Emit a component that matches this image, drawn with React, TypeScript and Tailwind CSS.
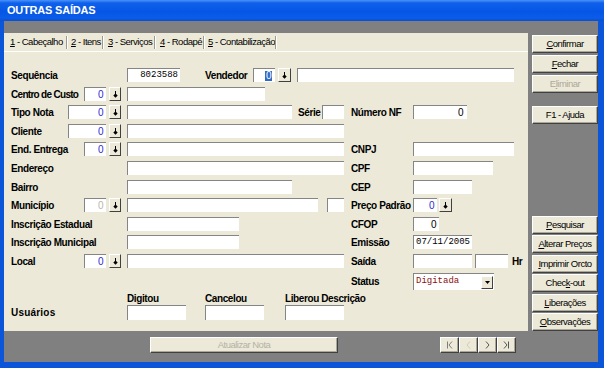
import React from 'react';

function Lbl({ c, children }: { c: string; children: React.ReactNode }) {
  return (
    <div className={`${c} h-[14px] shrink-0 flex items-center whitespace-nowrap text-[10px] font-bold tracking-[-0.4px] text-black`}>
      {children}
    </div>
  );
}

function Box({ c, children }: { c: string; children?: React.ReactNode }) {
  return (
    <div className={`${c} h-[14px] shrink-0 flex items-center overflow-hidden bg-white border-t border-l border-[#858585]`}>
      {children}
    </div>
  );
}

function Zero({ dim }: { dim?: boolean }) {
  return <span className={`ml-auto pr-[3px] text-[10px] ${dim ? 'text-[#b9b6aa]' : 'text-[#2a2ad6]'}`}>0</span>;
}

function SBtn({ c = 'ml-[3px] w-[12px]' }: { c?: string }) {
  return (
    <div className={`${c} h-[14px] shrink-0 flex items-center justify-center bg-[#ece9d8] border border-white border-r-[#404040] border-b-[#404040]`}>
      <svg width="5" height="7" viewBox="0 0 5 7">
        <path d="M2.5 0V3" stroke="#000" strokeWidth="1" />
        <path d="M0.3 4.6 2.5 2.4 4.7 4.6 2.5 6.8Z" fill="#000" />
      </svg>
    </div>
  );
}

function Btn({ children, c = '', off }: { children: React.ReactNode; c?: string; off?: boolean }) {
  return (
    <div
      className={`${c} h-[18px] shrink-0 flex items-center justify-center whitespace-nowrap bg-[#ece9d8] border border-white border-r-[#404040] border-b-[#404040] shadow-[inset_-1px_-1px_0_#aca899] ${off ? 'text-[#aca899]' : 'text-black'}`}
    >
      {children}
    </div>
  );
}

function Sep() {
  return (
    <div className="flex h-[13px] shrink-0">
      <div className="w-px bg-[#9d9a8c]" />
      <div className="w-px bg-white" />
    </div>
  );
}

function Tab({ c, n, label }: { c: string; n: string; label: string }) {
  return (
    <div className={`${c} shrink-0 whitespace-nowrap`}>
      <span className="underline underline-offset-1">{n}</span> - {label}
    </div>
  );
}

function UserCol({ label }: { label: string }) {
  return (
    <div className="flex flex-col w-[59px] shrink-0">
      <div className="h-[13px] flex items-center whitespace-nowrap text-[10px] font-bold tracking-[-0.4px]">{label}</div>
      <div className="h-[15px] bg-white border-t border-l border-[#858585]" />
    </div>
  );
}

const mono = "font-['Liberation_Mono','DejaVu_Sans_Mono',monospace] text-[9px] tracking-normal";

function NavArrow({ kind, color }: { kind: 'first' | 'prev' | 'next' | 'last'; color: string }) {
  return (
    <div className="w-[19px] h-[16px] shrink-0 flex items-center justify-center bg-[#ece9d8] border border-white border-r-[#404040] border-b-[#404040] shadow-[inset_-1px_-1px_0_#aca899]">
      <svg width="7" height="8" viewBox="0 0 7 8" fill="none" stroke={color} strokeWidth="1">
        {kind === 'first' && (
          <>
            <path d="M1.5 0.5V7.5" />
            <path d="M6 0.5 3 4 6 7.5" />
          </>
        )}
        {kind === 'prev' && <path d="M5 0.5 2 4 5 7.5" />}
        {kind === 'next' && <path d="M2 0.5 5 4 2 7.5" />}
        {kind === 'last' && (
          <>
            <path d="M1 0.5 4 4 1 7.5" />
            <path d="M5.5 0.5V7.5" />
          </>
        )}
      </svg>
    </div>
  );
}

function Panel() {
  return (
    <div className="w-[524px] shrink-0 bg-[#ece9d8] flex flex-col">
      <div className="h-[19px] shrink-0 flex items-center border-b border-white">
        <Tab c="w-[62px] pl-[6px]" n="1" label="Cabeçalho" />
        <Sep />
        <Tab c="w-[34px] pl-[3px]" n="2" label="Itens" />
        <Sep />
        <Tab c="w-[50px] pl-[4px]" n="3" label="Serviços" />
        <Sep />
        <Tab c="w-[47px] pl-[4px]" n="4" label="Rodapé" />
        <Sep />
        <Tab c="w-[70px] pl-[3px]" n="5" label="Contabilização" />
        <Sep />
      </div>

      <div className="flex flex-col pl-[7px] pt-[16px]">
        <div className="flex items-start h-[19px]">
          <Lbl c="w-[116px]">Sequência</Lbl>
          <Box c="w-[53px]">
            <span className={`ml-auto pr-[2px] ${mono}`}>8023588</span>
          </Box>
          <Lbl c="ml-[25px] w-[48px]">Vendedor</Lbl>
          <Box c="w-[22px]">
            <span className="ml-auto mr-[3px] px-px h-[10px] leading-[10px] bg-[#316ac5] text-white text-[10px]">0</span>
          </Box>
          <SBtn c="ml-[3px] w-[13px]" />
          <Box c="ml-[6px] w-[217px]" />
        </div>

        <div className="flex items-start h-[18px]">
          <Lbl c="w-[73px]"><span className="tracking-[-0.7px]">Centro de Custo</span></Lbl>
          <Box c="w-[22px]"><Zero /></Box>
          <SBtn />
          <Box c="ml-[6px] w-[138px]" />
        </div>

        <div className="flex items-start h-[19px]">
          <Lbl c="w-[57px]">Tipo Nota</Lbl>
          <Box c="w-[38px]"><Zero /></Box>
          <SBtn />
          <Box c="ml-[6px] w-[165px]" />
          <Lbl c="ml-[6px] w-[24px]">Série</Lbl>
          <Box c="w-[22px]" />
          <Lbl c="ml-[7px] w-[62px]">Número NF</Lbl>
          <Box c="w-[54px]">
            <span className="ml-auto pr-[4px] text-[10px]">0</span>
          </Box>
        </div>

        <div className="flex items-start h-[18px]">
          <Lbl c="w-[57px]">Cliente</Lbl>
          <Box c="w-[38px]"><Zero /></Box>
          <SBtn />
          <Box c="ml-[6px] w-[217px]" />
        </div>

        <div className="flex items-start h-[19px]">
          <Lbl c="w-[73px]">End. Entrega</Lbl>
          <Box c="w-[22px]"><Zero /></Box>
          <SBtn />
          <Box c="ml-[6px] w-[217px]" />
          <Lbl c="ml-[7px] w-[62px]">CNPJ</Lbl>
          <Box c="w-[101px]" />
        </div>

        <div className="flex items-start h-[19px]">
          <Lbl c="w-[116px]">Endereço</Lbl>
          <Box c="w-[217px]" />
          <Lbl c="ml-[7px] w-[62px]">CPF</Lbl>
          <Box c="w-[80px]" />
        </div>

        <div className="flex items-start h-[18px]">
          <Lbl c="w-[116px]">Bairro</Lbl>
          <Box c="w-[165px]" />
          <Lbl c="ml-[59px] w-[62px]">CEP</Lbl>
          <Box c="w-[59px]" />
        </div>

        <div className="flex items-start h-[19px]">
          <Lbl c="w-[73px]">Município</Lbl>
          <Box c="w-[22px]"><Zero dim /></Box>
          <SBtn />
          <Box c="ml-[6px] w-[191px]" />
          <Box c="ml-[9px] w-[17px]" />
          <Lbl c="ml-[7px] w-[62px]">Preço Padrão</Lbl>
          <Box c="w-[24px]"><Zero /></Box>
          <SBtn c="ml-[2px] w-[13px]" />
        </div>

        <div className="flex items-start h-[18px]">
          <Lbl c="w-[116px]">Inscrição Estadual</Lbl>
          <Box c="w-[112px]" />
          <Lbl c="ml-[112px] w-[62px]">CFOP</Lbl>
          <Box c="w-[26px]">
            <span className="ml-auto pr-[3px] text-[10px]">0</span>
          </Box>
        </div>

        <div className="flex items-start h-[19px]">
          <Lbl c="w-[116px]">Inscrição Municipal</Lbl>
          <Box c="w-[112px]" />
          <Lbl c="ml-[112px] w-[62px]">Emissão</Lbl>
          <Box c="w-[59px]">
            <span className={`pl-[2px] ${mono}`}>07/11/2005</span>
          </Box>
        </div>

        <div className="flex items-start h-[19px]">
          <Lbl c="w-[73px]">Local</Lbl>
          <Box c="w-[22px]"><Zero /></Box>
          <SBtn />
          <Box c="ml-[6px] w-[217px]" />
          <Lbl c="ml-[7px] w-[62px]">Saída</Lbl>
          <Box c="w-[59px]" />
          <Box c="ml-[3px] w-[33px]" />
          <Lbl c="ml-[4px] w-[14px]">Hr</Lbl>
        </div>

        <div className="flex items-start h-[19px]">
          <Lbl c="ml-[340px] w-[62px] h-[17px]">Status</Lbl>
          <div className="w-[81px] h-[17px] shrink-0 flex items-center bg-white border-t border-l border-[#858585]">
            <span className={`pl-[2px] text-[#8a1010] ${mono}`}>Digitada</span>
            <div className="ml-auto mr-[1px] w-[12px] h-[13px] flex items-center justify-center bg-[#ece9d8] border border-white border-r-[#404040] border-b-[#404040]">
              <svg width="5" height="3" viewBox="0 0 5 3">
                <path d="M0 0H5L2.5 3Z" fill="#000" />
              </svg>
            </div>
          </div>
        </div>

        <div className="flex items-end">
          <div className="w-[116px] h-[15px] shrink-0 flex items-center text-[10px] font-bold tracking-[0.2px]">Usuários</div>
          <UserCol label="Digitou" />
          <div className="w-[19px] shrink-0" />
          <UserCol label="Cancelou" />
          <div className="w-[21px] shrink-0" />
          <UserCol label="Liberou Descrição" />
        </div>
      </div>
    </div>
  );
}

function SideButtons() {
  return (
    <div className="w-[66px] ml-[4px] shrink-0 flex flex-col pt-[2px]">
      <Btn><span><span className="underline">C</span>onfirmar</span></Btn>
      <Btn c="mt-[2px]"><span><span className="underline">F</span>echar</span></Btn>
      <Btn c="mt-[2px]" off><span>E<span className="underline">l</span>iminar</span></Btn>
      <Btn c="mt-[13px]">F1 - Ajuda</Btn>
      <Btn c="mt-[92px]"><span><span className="underline">P</span>esquisar</span></Btn>
      <Btn c="mt-[1px]"><span><span className="underline">A</span>lterar Preços</span></Btn>
      <Btn c="mt-[2px]"><span><span className="underline">I</span>mprimir Orcto</span></Btn>
      <Btn c="mt-[1px]"><span>Chec<span className="underline">k</span>-out</span></Btn>
      <Btn c="mt-[2px]"><span><span className="underline">L</span>iberações</span></Btn>
      <Btn c="mt-[1px]"><span><span className="underline">O</span>bservações</span></Btn>
    </div>
  );
}

function BottomBar() {
  return (
    <div className="flex-1 flex items-start pt-[6px]">
      <div className="ml-[146px] w-[188px] h-[16px] shrink-0 flex items-center justify-center bg-[#ece9d8] border border-white border-r-[#404040] border-b-[#404040] shadow-[inset_-1px_-1px_0_#aca899] text-[#b5b2a4]">
        Atualizar Nota
      </div>
      <div className="ml-[102px] flex">
        <NavArrow kind="first" color="#7d7d7d" />
        <NavArrow kind="prev" color="#cfcbbd" />
        <NavArrow kind="next" color="#555" />
        <NavArrow kind="last" color="#555" />
      </div>
    </div>
  );
}

export default function App() {
  return (
    <div className="w-[604px] h-[368px] flex flex-col overflow-hidden bg-[#0b55d9] text-black text-[9.5px] tracking-[-0.5px] font-['Liberation_Sans',Arial,sans-serif]">
      <div className="h-[21px] shrink-0 flex items-center pl-[7px] bg-[linear-gradient(180deg,#4a93f7_0%,#0f61ec_14%,#0556e4_55%,#0a5ce9_85%,#0a4fd0_100%)]">
        <span className="text-white font-bold text-[11px] tracking-[-0.2px]">OUTRAS SAÍDAS</span>
      </div>
      <div className="flex-1 ml-[4px] mr-[6px] mb-[6px] flex flex-col bg-[#808080]">
        <div className="h-[12px] shrink-0" />
        <div className="flex h-[298px] shrink-0">
          <Panel />
          <SideButtons />
        </div>
        <BottomBar />
      </div>
    </div>
  );
}
